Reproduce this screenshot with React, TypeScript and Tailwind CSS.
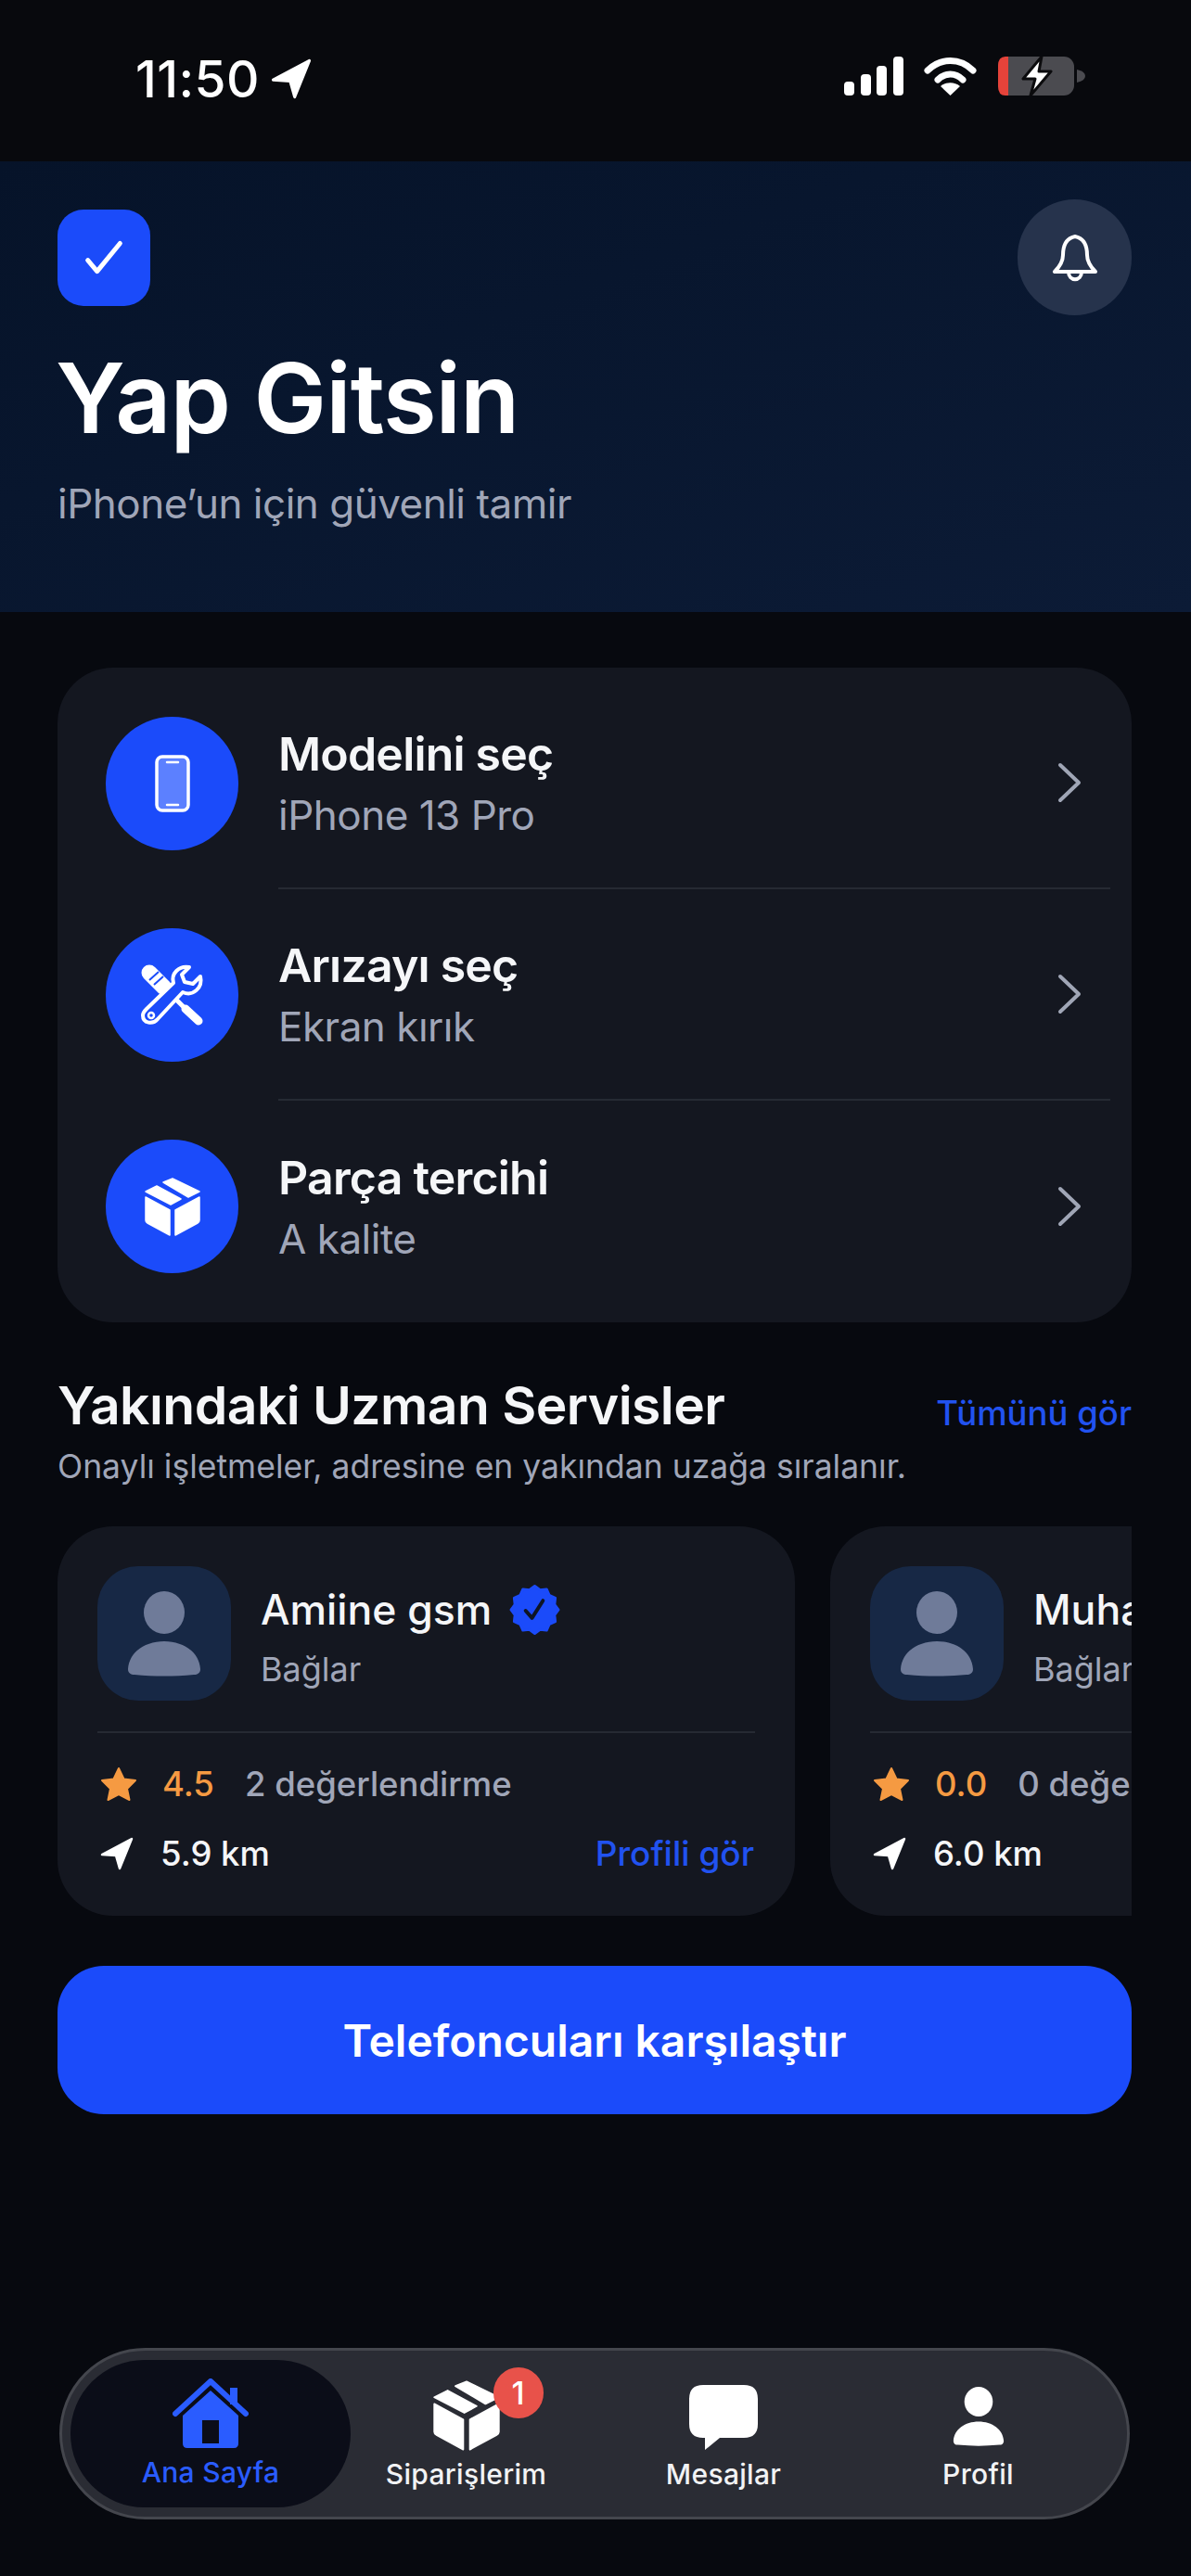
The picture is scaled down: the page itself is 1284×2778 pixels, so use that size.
import React from "react";

const LocArrow = ({ className, fill = "#fff" }: { className?: string; fill?: string }) => (
  <svg viewBox="0 0 36 36" className={className}>
    <path d="M2 19 L34 2 L21 34 L17 20 Z" fill={fill} stroke={fill} strokeWidth="2.5" strokeLinejoin="round" />
  </svg>
);

const Box = ({ className }: { className?: string }) => (
  <svg viewBox="0 0 60 63" className={className} fill="#fff" stroke="#fff" strokeWidth="1.5" strokeLinejoin="round">
    <path d="M1 15 L13 9 L39 23 L28 29 Z" />
    <path d="M20 5 L30 1 L59 15 L47 21 Z" />
    <path d="M1 21 L27 35 L27 62 L3 49 Q1 48 1 46 Z" />
    <path d="M33 35 L59 21 L59 46 Q59 48 57 49 L33 62 Z" />
  </svg>
);

const Tools = ({ className }: { className?: string }) => (
  <svg viewBox="0 0 70 68" className={className} fill="none">
    <line x1="10" y1="10" x2="26" y2="26" stroke="#fff" strokeWidth="17" strokeLinecap="round" />
    <line x1="10" y1="18" x2="20" y2="9" stroke="#1b4bfa" strokeWidth="2" />
    <line x1="15" y1="23" x2="25" y2="14" stroke="#1b4bfa" strokeWidth="2" />
    <line x1="26" y1="26" x2="50" y2="50" stroke="#fff" strokeWidth="5" />
    <line x1="49" y1="49" x2="63" y2="62" stroke="#fff" strokeWidth="9" strokeLinecap="round" />
    <path
      d="M7 49 L36 21 C33 11 42 2 53 4 L45 12 L48 20 L57 22 L65 14 C68 26 57 36 46 31 L19 60 C14 66 3 65 3 56 C3 53 5 51 7 49 Z"
      fill="#1b4bfa"
      stroke="#fff"
      strokeWidth="4"
      strokeLinejoin="round"
    />
    <circle cx="12" cy="56" r="3" stroke="#fff" strokeWidth="2.5" />
  </svg>
);

const Person = ({ className, fill }: { className?: string; fill: string }) => (
  <svg viewBox="0 0 80 92" className={className}>
    <ellipse cx="40" cy="23" rx="22" ry="23" fill={fill} />
    <path d="M1 84 C2 66 19 54 40 54 C61 54 78 66 79 84 C79 88 76 90 72 90 C50 92 30 92 8 90 C4 90 1 88 1 84 Z" fill={fill} />
  </svg>
);

const badgePoints = Array.from({ length: 24 }, (_, i) => {
  const a = (i * Math.PI) / 12 - Math.PI / 2;
  const r = i % 2 === 0 ? 26 : 22.5;
  return `${28 + r * Math.cos(a)},${28 + r * Math.sin(a)}`;
}).join(" ");

const Verified = () => (
  <svg viewBox="0 0 56 56" className="w-[55px] h-[56px] ml-[19px] shrink-0">
    <polygon points={badgePoints} fill="#1b4bfa" stroke="#1b4bfa" strokeWidth="3" strokeLinejoin="round" />
    <path d="M18 29 L25 37 L37 18" fill="none" stroke="#0e1524" strokeWidth="4" strokeLinecap="round" strokeLinejoin="round" />
  </svg>
);

const Star = () => (
  <svg viewBox="0 0 40 38" className="w-[40px] h-[38px] shrink-0">
    <path d="M20 2 L25.5 13.5 L38 15 L29 24 L31.5 36 L20 30 L8.5 36 L11 24 L2 15 L14.5 13.5 Z" fill="#f59a42" stroke="#f59a42" strokeWidth="2" strokeLinejoin="round" />
  </svg>
);

const Chevron = () => (
  <svg viewBox="0 0 28 44" className="w-[28px] h-[44px] shrink-0 mr-[30px]">
    <path d="M4 3 L24 22 L4 41" fill="none" stroke="#a0a6b6" strokeWidth="4" strokeLinecap="round" strokeLinejoin="round" />
  </svg>
);

const Row = ({ icon, title, sub, last }: { icon: React.ReactNode; title: string; sub: string; last?: boolean }) => (
  <div className="flex h-[228px] items-center pl-[52px] pr-[23px]">
    <div className="w-[143px] h-[144px] rounded-full bg-[#1b4bfa] flex items-center justify-center shrink-0">{icon}</div>
    <div className={`ml-[43px] flex-1 h-full flex items-center justify-between ${last ? "" : "border-b-2 border-[#262a33]"}`}>
      <div>
        <div className="text-[50px] leading-[62px] font-semibold tracking-[-0.8px] text-[#f5f6f8]">{title}</div>
        <div className="text-[44px] leading-[56px] mt-[7px] tracking-[-0.5px] text-[#a0a6b8]">{sub}</div>
      </div>
      <Chevron />
    </div>
  </div>
);

const ServiceCard = ({ name, rating, reviews, km, verified }: { name: string; rating: string; reviews: string; km: string; verified?: boolean }) => (
  <div className="w-[795px] h-[420px] shrink-0 rounded-[60px] bg-[#141720] pt-[43px] pl-[43px] pr-[43px]">
    <div className="flex items-start h-[178px]">
      <div className="w-[144px] h-[145px] rounded-[44px] bg-[#172845] flex items-center justify-center shrink-0">
        <Person className="w-[80px] h-[92px]" fill="#6f7b99" />
      </div>
      <div className="ml-[32px] pt-[19px]">
        <div className="flex items-center whitespace-nowrap">
          <span className="text-[44.5px] leading-[56px] font-medium text-[#f5f6f8]">{name}</span>
          {verified && <Verified />}
        </div>
        <div className="text-[36px] leading-[44px] mt-[14px] text-[#a0a6b8]">Bağlar</div>
      </div>
    </div>
    <div className="border-t-2 border-[#262a33] pt-[33px]">
      <div className="flex items-center h-[44px] pl-[3px] whitespace-nowrap">
        <Star />
        <span className="ml-[27px] text-[36.5px] font-medium text-[#f59a42]">{rating}</span>
        <span className="ml-[33px] text-[36.5px] font-medium text-[#a0a6b8]">{reviews}</span>
      </div>
      <div className="flex items-center justify-between mt-[31px] h-[44px] pl-[3px] pr-[1px] whitespace-nowrap">
        <div className="flex items-center">
          <LocArrow className="w-[36px] h-[36px]" />
          <span className="ml-[29px] text-[36.5px] font-medium text-[#f5f6f8]">{km}</span>
        </div>
        <span className="text-[37px] font-medium text-[#2152f0]">Profili gör</span>
      </div>
    </div>
  </div>
);

const Tab = ({ label, active, icon, className }: { label: string; active?: boolean; icon: React.ReactNode; className: string }) => (
  <div className={`flex flex-col items-center ${className}`}>
    <div className="h-[80px] flex items-end justify-center relative">{icon}</div>
    <div className={`mt-[5px] text-[30px] leading-[40px] font-medium tracking-[0.3px] whitespace-nowrap ${active ? "text-[#2a5cff]" : "text-[#f2f3f5]"}`}>{label}</div>
  </div>
);

export default function App() {
  return (
    <div className="w-[1284px] h-[2778px] bg-[#07090f] flex flex-col overflow-hidden" style={{ fontFamily: "Inter, 'Noto Sans', sans-serif" }}>
      {/* status bar */}
      <div className="h-[174px] bg-[#08090d] shrink-0 flex items-start justify-between pt-[58px] pl-[146px] pr-[114px]">
        <div className="flex items-center h-[54px]">
          <span className="text-[55px] leading-[54px] font-medium text-white tracking-[0.4px]">11:50</span>
          <LocArrow className="w-[44px] h-[44px] ml-[12px]" />
        </div>
        <div className="flex items-center h-[48px]">
          <svg viewBox="0 0 64 42" className="w-[64px] h-[42px]">
            <rect x="0" y="27" width="11" height="15" rx="4" fill="#fff" />
            <rect x="18" y="19" width="11" height="23" rx="4" fill="#fff" />
            <rect x="35" y="10" width="11" height="32" rx="4" fill="#fff" />
            <rect x="53" y="0" width="11" height="42" rx="4" fill="#fff" />
          </svg>
          <svg viewBox="0 0 57 42" className="w-[57px] h-[42px] ml-[22px]">
            <path d="M4 15 C18 1 39 1 53 15" fill="none" stroke="#fff" strokeWidth="7" strokeLinecap="round" />
            <path d="M15 25 C23 17 34 17 42 25" fill="none" stroke="#fff" strokeWidth="7" strokeLinecap="round" />
            <path d="M28.500 42 L18 32 C24 27 33 27 39 32 Z" fill="#fff" />
          </svg>
          <svg viewBox="0 0 94 42" className="w-[94px] h-[42px] ml-[23px]">
            <rect x="0" y="0" width="82" height="42" rx="11" fill="#4b4b50" />
            <path d="M11 0 H8 Q0 0 0 10 V32 Q0 42 8 42 H11 Z" fill="#e5433a" />
            <path d="M85 14 Q94 16 94 21 Q94 26 85 28 Z" fill="#4b4b50" />
            <path d="M47 0 L27 24 H40 L35 42 L57 16 H44 Z" fill="#fff" stroke="#0b0b0d" strokeWidth="3" strokeLinejoin="round" />
          </svg>
        </div>
      </div>

      {/* header */}
      <div className="h-[486px] shrink-0 bg-gradient-to-br from-[#061329] to-[#0c1b36] pl-[62px] pr-[64px] pt-[41px]">
        <div className="flex items-center justify-between h-[125px]">
          <div className="w-[100px] h-[104px] rounded-[28px] bg-[#1b4bfa] flex items-center justify-center">
            <svg viewBox="0 0 46 40" className="w-[42px] h-[40px]">
              <path d="M4 23 L15 36 L42 3" fill="none" stroke="#fff" strokeWidth="5.500" strokeLinecap="round" strokeLinejoin="round" />
            </svg>
          </div>
          <div className="w-[123px] h-[125px] rounded-full bg-[#26334c] flex items-center justify-center">
            <svg viewBox="0 0 50 54" className="w-[50px] h-[54px]">
              <path d="M25 4 C15 6 12 15 12 24 C12 32 8 37 3 42 H47 C42 37 38 32 38 24 C38 15 35 6 25 4 Z" fill="none" stroke="#fff" strokeWidth="4" strokeLinejoin="round" />
              <path d="M18 42 C18 53 32 53 32 42" fill="none" stroke="#fff" strokeWidth="4" />
            </svg>
          </div>
        </div>
        <div className="mt-[29px] -ml-[2px] text-[105px] leading-[120px] font-semibold text-white tracking-[-1px]">Yap Gitsin</div>
        <div className="mt-[26px] text-[44px] leading-[56px] tracking-[-0.5px] text-[#a0a6b8]">iPhone’un için güvenli tamir</div>
      </div>

      {/* main */}
      <div className="pl-[62px] pr-[64px] pt-[60px] flex flex-col">
        <div className="h-[706px] rounded-[60px] bg-[#141720] py-[11px]">
          <Row
            title="Modelini seç"
            sub="iPhone 13 Pro"
            icon={
              <svg viewBox="0 0 38 62" className="w-[38px] h-[62px]">
                <rect x="2" y="2" width="34" height="58" rx="6" fill="#5c80ff" stroke="#fff" strokeWidth="3.500" />
                <line x1="13" y1="8" x2="25" y2="8" stroke="#fff" strokeWidth="2.500" strokeLinecap="round" />
                <line x1="13" y1="54" x2="25" y2="54" stroke="#fff" strokeWidth="2.500" strokeLinecap="round" />
              </svg>
            }
          />
          <Row title="Arızayı seç" sub="Ekran kırık" icon={<Tools className="w-[70px] h-[68px]" />} />
          <Row title="Parça tercihi" sub="A kalite" last icon={<Box className="w-[60px] h-[63px]" />} />
        </div>

        <div className="mt-[55px] flex items-center justify-between h-[70px]">
          <div className="text-[57px] leading-[70px] font-semibold text-[#f5f6f8] tracking-[-0.55px] whitespace-nowrap">Yakındaki Uzman Servisler</div>
          <div className="text-[36.5px] font-medium text-[#2152f0] whitespace-nowrap pt-[16px]">Tümünü gör</div>
        </div>
        <div className="mt-[9px] text-[35.5px] leading-[44px] text-[#a0a6b8] whitespace-nowrap">Onaylı işletmeler, adresine en yakından uzağa sıralanır.</div>

        <div className="mt-[42px] flex gap-[38px] overflow-hidden">
          <ServiceCard name="Amiine gsm" rating="4.5" reviews="2 değerlendirme" km="5.9 km" verified />
          <ServiceCard name="Muhammed Servis" rating="0.0" reviews="0 değerlendirme" km="6.0 km" />
        </div>

        <div className="mt-[54px] h-[160px] rounded-[50px] bg-[#1b4bfa] flex items-center justify-center text-[48px] font-semibold text-white pt-[2px]">
          Telefoncuları karşılaştır
        </div>
      </div>

      {/* tab bar */}
      <div className="mt-auto mb-[61px] ml-[64px] mr-[66px] h-[185px] rounded-full bg-[#2a2c34] border-[3px] border-[#44464d] flex items-center pl-[9px] relative">
        <div className="w-[302px] h-[159px] rounded-[80px] bg-[#0b0d18] shrink-0 flex justify-center pt-[16px]">
          <Tab
            label="Ana Sayfa"
            active
            className=""
            icon={
              <svg viewBox="0 0 82 76" className="w-[82px] h-[76px]">
                <path d="M3 38 L41 3 L79 38" fill="none" stroke="#2a5cff" strokeWidth="6" strokeLinecap="round" strokeLinejoin="round" />
                <rect x="62" y="10" width="8" height="18" fill="#2a5cff" />
                <path d="M41 13 L11 40 V70 Q11 75 16 75 H66 Q71 75 71 70 V40 Z M32 45 H50 V70 H32 Z" fill="#2a5cff" fillRule="evenodd" />
              </svg>
            }
          />
        </div>
        <div className="flex flex-1 items-start pt-[2px]">
          <Tab
            label="Siparişlerim"
            className="ml-[39px] w-[171px]"
            icon={
              <div className="relative">
                <Box className="w-[72px] h-[76px]" />
                <div className="absolute left-[65px] -top-[14px] w-[54px] h-[55px] rounded-full bg-[#e8524a] flex items-center justify-center text-[34px] font-medium text-white">1</div>
              </div>
            }
          />
          <Tab
            label="Mesajlar"
            className="ml-[131px] w-[122px]"
            icon={
              <svg viewBox="0 0 76 72" className="w-[76px] h-[72px]">
                <path d="M16 1 H60 Q75 1 75 16 V43 Q75 58 60 58 H34 L18 71 V58 H16 Q1 58 1 43 V16 Q1 1 16 1 Z" fill="#fff" />
              </svg>
            }
          />
          <Tab
            label="Profil"
            className="ml-[176px] w-[75px]"
            icon={<div className="pb-[5px]"><Person className="w-[58px] h-[64px]" fill="#fff" /></div>}
          />
        </div>
      </div>
    </div>
  );
}
